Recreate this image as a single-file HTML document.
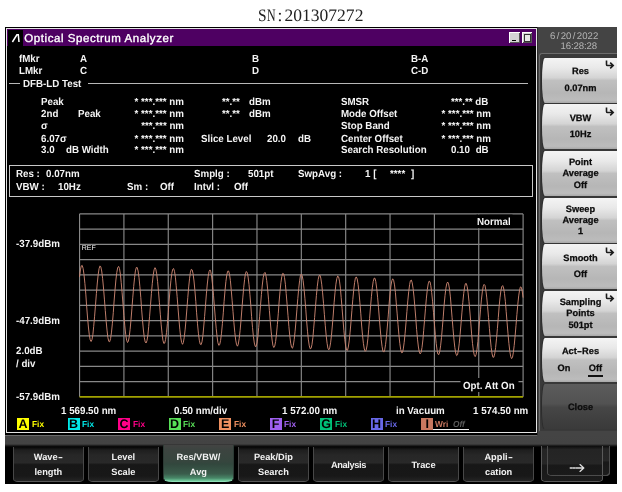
<!DOCTYPE html>
<html lang="en"><head><meta charset="utf-8"><title>Optical Spectrum Analyzer</title>
<style>
html,body{margin:0;padding:0;background:#fff;}
body{width:622px;height:492px;position:relative;overflow:hidden;font-family:"Liberation Sans",sans-serif;text-rendering:geometricPrecision;will-change:transform;}
.sn{position:absolute;left:258.1px;letter-spacing:0.03px;top:5px;font-family:"Liberation Serif",serif;font-size:17.5px;line-height:20px;color:#222;white-space:nowrap;}
.sn .c{display:inline-block;width:8.78px;height:20px;vertical-align:top;}
.sn .c span{display:inline-block;transform-origin:0 50%;}
.screen{position:absolute;left:5.2px;top:27.2px;width:611.7px;height:457.1px;background:#000;}
.win{position:absolute;left:6.1px;top:28px;width:531.3px;height:405.4px;border:1px solid #e4e4e4;background:#000;box-sizing:border-box;}
.title{position:absolute;left:7.1px;top:28.8px;width:529.4px;height:17.6px;background:#4e0062;}
.logo{position:absolute;left:7.9px;top:29.5px;width:15.1px;height:16.4px;background:#000;}
.ttext{position:absolute;left:24.3px;top:32px;font-size:11.5px;line-height:14px;color:#fff;letter-spacing:0.56px;white-space:nowrap;-webkit-text-stroke:0.35px #fff;}
.wb{position:absolute;top:32px;width:10.6px;height:10.9px;background:#d4d4d4;box-shadow:inset 1px 1px 0 #fff, inset -1px -1px 0 #555;}
.t{position:absolute;font-size:10.25px;line-height:12px;font-weight:bold;color:#f4f4f4;white-space:nowrap;transform:scaleX(0.951);transform-origin:0 50%;}
.t.r{transform-origin:100% 50%;}
.fx{font-size:8.75px;}
.tb{position:absolute;top:417.8px;width:11.9px;height:11.9px;font-size:12.5px;line-height:12px;font-weight:bold;color:#000;text-align:center;}
.hl{position:absolute;height:1px;background:#b8b8b8;}
.box{position:absolute;left:9.3px;top:164.5px;width:521.7px;height:30.3px;border:1px solid #c8c8c8;}
.rp{position:absolute;left:537.3px;top:27.2px;width:79.6px;height:417px;background:#444;border-left:1px solid #2c2c2c;box-sizing:border-box;}
.rf{position:absolute;left:539px;top:53.4px;width:77.9px;height:378px;border:1px solid #6c6c6c;border-right:0;border-bottom:0;border-radius:3px 0 0 0;background:#3a3a3a;box-sizing:border-box;}
.band{position:absolute;left:5.2px;top:434.7px;width:611.7px;height:12px;background:linear-gradient(#444 0,#434343 9px,#1a1a1a 10.7px,#000 12px);}
.band2{position:absolute;left:5.2px;top:434.7px;width:532.1px;height:1.2px;background:#6a6a6a;}
.date{position:absolute;left:538px;width:79px;font-size:9.6px;line-height:12px;color:#b4b4b4;white-space:nowrap;letter-spacing:0.05px;}
.date i{font-style:normal;padding:0 1.3px;}
.rb{position:absolute;left:541.6px;width:75.3px;height:44.8px;border-radius:2.8px 0 0 2.8px / 22px 0 0 22px;background:linear-gradient(#f4f4f4 0%,#e9e9e9 22%,#d4d4d4 44%,#c0c0c0 50%,#b6b6b6 78%,#bcbcbc 94%,#a8a8a8 100%);box-shadow:-1px 0 1px #2a2a2a;}
.rb.dark{background:linear-gradient(#5c5c5c 0%,#525252 44%,#464646 52%,#3a3a3a 100%);}
.rt{position:absolute;text-align:center;font-size:9.25px;line-height:12px;font-weight:bold;color:#0c0c0c;white-space:nowrap;-webkit-text-stroke:0.25px #0c0c0c;}
.bb{position:absolute;top:446.6px;width:70.7px;height:35.6px;box-sizing:border-box;border:1px solid #484848;border-top:0;border-bottom-color:#585858;border-radius:0 0 5px 5px / 0 0 3px 3px;background:linear-gradient(#060606 0%,#1e1e1e 9%,#272727 24%,#292929 46%,#171717 52%,#181818 85%,#242424 100%);}
.bb.sel{top:445px;height:37.3px;border-color:#2c3a34;border-bottom-color:#8fe0b8;border-radius:0 0 9px 9px / 0 0 3.5px 3.5px;background:linear-gradient(#434443 0%,#3c4440 14%,#36463e 46%,#32473d 53%,#3a5c4b 80%,#488868 92%,#74cfa0 100%);}
.bb.nx{border-color:#5a5a5a;background:linear-gradient(#0c0c0c 0%,#242424 10%,#262626 50%,#181818 56%,#1c1c1c 100%);}
.bt{position:absolute;width:70.7px;text-align:center;font-size:9.25px;line-height:12px;font-weight:bold;color:#f2f2f2;white-space:nowrap;}
.hy{display:inline-block;transform:scaleX(1.6);margin:0 1.1px;}
svg{position:absolute;left:0;top:0;}
</style></head><body>
<div class="sn"><span class="c"><span style="transform:scaleX(0.88)">S</span></span><span class="c"><span style="transform:scaleX(0.68)">N</span></span><span class="c" style="text-align:center">:</span>201307272</div>
<div class="screen"></div>
<div class="rp"></div>
<div class="rf"></div>
<div class="band"></div>
<div class="band2"></div>
<div class="win"></div>
<div class="title"></div>
<div class="logo"><svg width="15.1" height="16.4" viewBox="0 0 15.1 16.4"><path d="M4.4 12 L8.9 4.8 H10.3 L11 12" fill="none" stroke="#fff" stroke-width="1.5" stroke-linejoin="miter"/></svg></div>
<div class="ttext">Optical Spectrum Analyzer</div>
<div class="wb" style="left:509.3px"><div style="position:absolute;left:3px;top:7.5px;width:4px;height:1.5px;background:#000"></div></div>
<div class="wb" style="left:521.8px"><div style="position:absolute;left:2.3px;top:2px;width:5px;height:5.5px;border:1px solid #333;border-top-width:1.6px;background:#e8e8e8;box-sizing:content-box"></div></div>
<div class="hl" style="left:9px;width:10.5px;top:83.3px"></div>
<div class="hl" style="left:88.4px;width:440px;top:83.3px"></div>
<div class="box"></div>
<svg width="622" height="492" viewBox="0 0 622 492">
<g stroke="#888" stroke-width="1.15">
<line x1="79.55" y1="213.9" x2="79.55" y2="396.8"/>
<line x1="123.91" y1="213.9" x2="123.91" y2="396.8"/>
<line x1="168.26" y1="213.9" x2="168.26" y2="396.8"/>
<line x1="212.62" y1="213.9" x2="212.62" y2="396.8"/>
<line x1="256.97" y1="213.9" x2="256.97" y2="396.8"/>
<line x1="301.33" y1="213.9" x2="301.33" y2="396.8"/>
<line x1="345.68" y1="213.9" x2="345.68" y2="396.8"/>
<line x1="390.04" y1="213.9" x2="390.04" y2="396.8"/>
<line x1="434.39" y1="213.9" x2="434.39" y2="396.8"/>
<line x1="478.75" y1="213.9" x2="478.75" y2="396.8"/>
<line x1="523.10" y1="213.9" x2="523.10" y2="396.8"/>
<line x1="79.55" y1="213.90" x2="523.1" y2="213.90"/>
<line x1="79.55" y1="229.14" x2="523.1" y2="229.14"/>
<line x1="79.55" y1="244.38" x2="523.1" y2="244.38"/>
<line x1="79.55" y1="259.62" x2="523.1" y2="259.62"/>
<line x1="79.55" y1="274.87" x2="523.1" y2="274.87"/>
<line x1="79.55" y1="290.11" x2="523.1" y2="290.11"/>
<line x1="79.55" y1="305.35" x2="523.1" y2="305.35"/>
<line x1="79.55" y1="320.59" x2="523.1" y2="320.59"/>
<line x1="79.55" y1="335.83" x2="523.1" y2="335.83"/>
<line x1="79.55" y1="351.08" x2="523.1" y2="351.08"/>
<line x1="79.55" y1="366.32" x2="523.1" y2="366.32"/>
<line x1="79.55" y1="381.56" x2="523.1" y2="381.56"/>
</g>
<line x1="79.55" y1="396.8" x2="523.1" y2="396.8" stroke="#a2a200" stroke-width="1.8"/>
<polyline fill="none" stroke="#c88470" stroke-width="0.95" stroke-linejoin="round" points="79.5,276.9 80.4,269.9 81.3,265.9 82.2,265.4 83.1,268.4 84.0,274.6 84.9,283.5 85.8,294.1 86.6,305.6 87.5,317.0 88.4,327.0 89.3,334.9 90.2,339.9 91.1,341.5 92.0,339.6 92.9,334.4 93.7,326.4 94.6,316.2 95.5,304.9 96.4,293.5 97.3,283.0 98.2,274.4 99.1,268.5 100.0,265.9 100.8,266.8 101.7,271.0 102.6,278.3 103.5,288.0 104.4,299.1 105.3,310.6 106.2,321.6 107.1,330.9 107.9,337.7 108.8,341.4 109.7,341.7 110.6,338.5 111.5,332.1 112.4,323.2 113.3,312.5 114.1,301.0 115.0,289.9 115.9,280.0 116.8,272.4 117.7,267.7 118.6,266.4 119.5,268.6 120.4,274.1 121.2,282.4 122.1,292.7 123.0,304.1 123.9,315.5 124.8,325.9 125.7,334.4 126.6,340.1 127.5,342.5 128.3,341.4 129.2,336.9 130.1,329.5 131.0,319.8 131.9,308.7 132.8,297.2 133.7,286.5 134.6,277.4 135.4,270.9 136.3,267.5 137.2,267.5 138.1,271.0 139.0,277.6 139.9,286.8 140.8,297.6 141.6,309.2 142.5,320.3 143.4,330.0 144.3,337.5 145.2,342.0 146.1,343.0 147.0,340.6 147.9,335.0 148.7,326.6 149.6,316.2 150.5,304.9 151.4,293.6 152.3,283.4 153.2,275.2 154.1,269.8 155.0,267.7 155.8,269.1 156.7,273.9 157.6,281.6 158.5,291.5 159.4,302.7 160.3,314.2 161.2,324.9 162.1,333.8 162.9,340.2 163.8,343.4 164.7,343.1 165.6,339.4 166.5,332.6 167.4,323.4 168.3,312.5 169.1,301.1 170.0,290.1 170.9,280.6 171.8,273.4 172.7,269.3 173.6,268.5 174.5,271.3 175.4,277.2 176.2,285.8 177.1,296.3 178.0,307.8 178.9,319.1 179.8,329.2 180.7,337.2 181.6,342.4 182.5,344.3 183.3,342.7 184.2,337.7 185.1,329.9 186.0,320.0 186.9,308.8 187.8,297.4 188.7,286.9 189.6,278.2 190.4,272.2 191.3,269.3 192.2,269.9 193.1,273.9 194.0,281.0 194.9,290.4 195.8,301.4 196.6,312.8 197.5,323.8 198.4,333.2 199.3,340.2 200.2,344.1 201.1,344.7 202.0,341.8 202.9,335.7 203.7,327.0 204.6,316.4 205.5,305.1 206.4,293.9 207.3,284.0 208.2,276.3 209.1,271.4 210.0,269.9 210.8,271.8 211.7,277.0 212.6,285.1 213.5,295.2 214.4,306.5 215.3,317.9 216.2,328.3 217.1,336.9 217.9,342.7 218.8,345.4 219.7,344.6 220.6,340.4 221.5,333.2 222.4,323.7 223.3,312.8 224.1,301.4 225.0,290.6 225.9,281.5 226.8,274.8 227.7,271.2 228.6,271.0 229.5,274.2 230.4,280.6 231.2,289.5 232.1,300.2 233.0,311.6 233.9,322.7 234.8,332.5 235.7,340.1 236.6,344.8 237.5,346.2 238.3,344.0 239.2,338.6 240.1,330.5 241.0,320.4 241.9,309.1 242.8,297.9 243.7,287.7 244.6,279.4 245.4,273.8 246.3,271.5 247.2,272.6 248.1,277.1 249.0,284.6 249.9,294.3 250.8,305.3 251.6,316.7 252.5,327.4 253.4,336.5 254.3,343.0 255.2,346.4 256.1,346.4 257.0,343.0 257.9,336.5 258.7,327.5 259.6,316.8 260.5,305.5 261.4,294.6 262.3,285.0 263.2,277.7 264.1,273.4 265.0,272.4 265.8,274.8 266.7,280.5 267.6,288.9 268.5,299.2 269.4,310.5 270.3,321.7 271.2,331.9 272.1,340.0 272.9,345.4 273.8,347.5 274.7,346.2 275.6,341.6 276.5,334.0 277.4,324.3 278.3,313.3 279.1,302.0 280.0,291.5 280.9,282.7 281.8,276.5 282.7,273.4 283.6,273.8 284.5,277.5 285.4,284.3 286.2,293.5 287.1,304.3 288.0,315.7 288.9,326.6 289.8,336.1 290.7,343.2 291.6,347.4 292.5,348.2 293.3,345.5 294.2,339.7 295.1,331.2 296.0,320.9 296.9,309.7 297.8,298.6 298.7,288.7 299.6,280.8 300.4,275.8 301.3,274.0 302.2,275.7 303.1,280.6 304.0,288.4 304.9,298.3 305.8,309.5 306.6,320.8 307.5,331.2 308.4,339.9 309.3,345.9 310.2,348.8 311.1,348.3 312.0,344.4 312.9,337.5 313.7,328.2 314.6,317.5 315.5,306.2 316.4,295.5 317.3,286.3 318.2,279.4 319.1,275.6 320.0,275.2 320.8,278.1 321.7,284.2 322.6,292.9 323.5,303.4 324.4,314.7 325.3,325.8 326.2,335.6 327.1,343.3 327.9,348.2 328.8,349.8 329.7,347.9 330.6,342.8 331.5,335.0 332.4,325.0 333.3,314.0 334.1,302.8 335.0,292.6 335.9,284.2 336.8,278.5 337.7,276.0 338.6,276.8 339.5,281.1 340.4,288.2 341.2,297.7 342.1,308.6 343.0,319.9 343.9,330.6 344.8,339.7 345.7,346.4 346.6,350.0 347.5,350.3 348.3,347.1 349.2,340.9 350.1,332.2 351.0,321.7 351.9,310.5 352.8,299.6 353.7,290.0 354.6,282.6 355.4,278.1 356.3,276.9 357.2,279.0 358.1,284.4 359.0,292.6 359.9,302.7 360.8,313.8 361.6,325.0 362.5,335.2 363.4,343.4 364.3,349.0 365.2,351.3 366.1,350.3 367.0,345.9 367.9,338.6 368.7,329.2 369.6,318.3 370.5,307.1 371.4,296.7 372.3,287.8 373.2,281.5 374.1,278.2 375.0,278.3 375.8,281.7 376.7,288.3 377.6,297.2 378.5,307.8 379.4,319.1 380.3,330.0 381.2,339.5 382.1,346.7 382.9,351.1 383.8,352.1 384.7,349.8 385.6,344.3 386.5,336.1 387.4,326.0 388.3,314.9 389.1,303.9 390.0,294.0 390.9,286.0 391.8,280.8 392.7,278.8 393.6,280.2 394.5,284.9 395.4,292.4 396.2,302.1 397.1,313.1 398.0,324.3 398.9,334.7 399.8,343.4 400.7,349.6 401.6,352.7 402.5,352.5 403.3,348.9 404.2,342.3 405.1,333.3 406.0,322.7 406.9,311.6 407.8,300.9 408.7,291.7 409.6,284.7 410.4,280.7 411.3,280.0 412.2,282.7 413.1,288.5 414.0,297.0 414.9,307.2 415.8,318.4 416.6,329.4 417.5,339.2 418.4,347.0 419.3,352.1 420.2,353.9 421.1,352.4 422.0,347.5 422.9,339.9 423.7,330.3 424.6,319.4 425.5,308.3 426.4,298.1 427.3,289.7 428.2,283.9 429.1,281.1 430.0,281.7 430.8,285.7 431.7,292.6 432.6,301.8 433.5,312.5 434.4,323.6 435.3,334.3 436.2,343.4 437.1,350.3 437.9,354.1 438.8,354.6 439.7,351.8 440.6,345.8 441.5,337.4 442.4,327.1 443.3,316.1 444.1,305.3 445.0,295.7 445.9,288.2 446.8,283.5 447.7,282.0 448.6,284.0 449.5,289.1 450.4,296.9 451.2,306.8 452.1,317.8 453.0,328.8 453.9,339.0 454.8,347.3 455.7,353.0 456.6,355.6 457.5,354.8 458.3,350.7 459.2,343.8 460.1,334.6 461.0,323.9 461.9,312.9 462.8,302.5 463.7,293.6 464.6,287.1 465.4,283.7 466.3,283.5 467.2,286.7 468.1,292.9 469.0,301.6 469.9,312.0 470.8,323.1 471.6,333.9 472.5,343.4 473.4,350.8 474.3,355.3 475.2,356.6 476.1,354.6 477.0,349.3 477.9,341.4 478.7,331.6 479.6,320.7 480.5,309.8 481.4,299.9 482.3,291.9 483.2,286.6 484.1,284.4 485.0,285.5 485.8,289.9 486.7,297.1 487.6,306.6 488.5,317.3 489.4,328.4 490.3,338.8 491.2,347.5 492.1,353.9 492.9,357.2 493.8,357.2 494.7,353.9 495.6,347.6 496.5,338.8 497.4,328.5 498.3,317.5 499.1,306.9 500.0,297.7 500.9,290.7 501.8,286.5 502.7,285.6 503.6,288.0 504.5,293.5 505.4,301.7 506.2,311.7 507.1,322.7 508.0,333.6 508.9,343.4 509.8,351.3 510.7,356.5 511.6,358.6 512.5,357.3 513.3,352.8 514.2,345.5 515.1,336.0 516.0,325.4 516.9,314.5 517.8,304.3 518.7,295.9 519.6,289.9 520.4,286.9 521.3,287.3 522.2,291.0 523.1,297.6"/>
<rect x="476.5" y="214.6" width="36" height="13.5" fill="#000"/>
<rect x="460.5" y="378" width="58" height="14" fill="#000"/>
<text x="81.8" y="250.4" font-family="Liberation Sans, sans-serif" font-size="7" fill="#f4f4f4">REF</text>
</svg>
<span class="t" style="left:19.30px;top:54px;">fMkr</span>
<span class="t" style="left:80.00px;top:54px;">A</span>
<span class="t" style="left:251.70px;top:54px;">B</span>
<span class="t" style="left:410.60px;top:54px;">B-A</span>
<span class="t" style="left:19.30px;top:66px;">LMkr</span>
<span class="t" style="left:80.00px;top:66px;">C</span>
<span class="t" style="left:251.70px;top:66px;">D</span>
<span class="t" style="left:410.60px;top:66px;">C-D</span>
<span class="t" style="left:22.60px;top:79px;">DFB-LD Test</span>
<span class="t" style="left:41.20px;top:97px;">Peak</span>
<span class="t" style="left:41.20px;top:109px;">2nd</span>
<span class="t" style="left:78.10px;top:109px;">Peak</span>
<span class="t" style="left:41.20px;top:121px;">σ</span>
<span class="t" style="left:41.20px;top:134px;">6.07σ</span>
<span class="t" style="left:41.20px;top:145px;">3.0</span>
<span class="t" style="left:65.50px;top:145px;">dB Width</span>
<span class="t r" style="right:438.00px;top:97px;">* ***.*** nm</span>
<span class="t r" style="right:438.00px;top:109px;">* ***.*** nm</span>
<span class="t r" style="right:438.00px;top:134px;">* ***.*** nm</span>
<span class="t r" style="right:438.00px;top:145px;">* ***.*** nm</span>
<span class="t r" style="right:438.00px;top:121px;">***.*** nm</span>
<span class="t r" style="right:351.60px;top:97px;">dBm</span>
<span class="t r" style="right:382.20px;top:97px;">**.**</span>
<span class="t r" style="right:351.60px;top:109px;">dBm</span>
<span class="t r" style="right:382.20px;top:109px;">**.**</span>
<span class="t" style="left:201.30px;top:134px;">Slice Level</span>
<span class="t" style="left:267.20px;top:134px;">20.0</span>
<span class="t" style="left:298.40px;top:134px;">dB</span>
<span class="t" style="left:341.40px;top:97px;">SMSR</span>
<span class="t" style="left:341.40px;top:109px;">Mode Offset</span>
<span class="t" style="left:341.40px;top:121px;">Stop Band</span>
<span class="t" style="left:341.40px;top:134px;">Center Offset</span>
<span class="t" style="left:341.40px;top:145px;">Search Resolution</span>
<span class="t r" style="right:133.30px;top:97px;">***.** dB</span>
<span class="t r" style="right:131.50px;top:109px;">* ***.*** nm</span>
<span class="t r" style="right:131.50px;top:121px;">* ***.*** nm</span>
<span class="t r" style="right:131.50px;top:134px;">* ***.*** nm</span>
<span class="t r" style="right:133.30px;top:145px;">dB</span>
<span class="t r" style="right:152.00px;top:145px;">0.10</span>
<span class="t" style="left:15.90px;top:169px;">Res :</span>
<span class="t" style="left:46.30px;top:169px;">0.07nm</span>
<span class="t" style="left:15.90px;top:182px;">VBW :</span>
<span class="t" style="left:57.60px;top:182px;">10Hz</span>
<span class="t" style="left:127.00px;top:182px;">Sm :</span>
<span class="t" style="left:159.60px;top:182px;">Off</span>
<span class="t" style="left:194.00px;top:169px;">Smplg :</span>
<span class="t" style="left:247.60px;top:169px;">501pt</span>
<span class="t" style="left:194.00px;top:182px;">Intvl :</span>
<span class="t" style="left:233.90px;top:182px;">Off</span>
<span class="t" style="left:298.30px;top:169px;">SwpAvg :</span>
<span class="t" style="left:364.60px;top:169px;">1 [</span>
<span class="t" style="left:389.60px;top:169px;">****</span>
<span class="t" style="left:410.50px;top:169px;">]</span>
<span class="t" style="left:15.60px;top:239px;">-37.9dBm</span>
<span class="t" style="left:15.60px;top:316px;">-47.9dBm</span>
<span class="t" style="left:15.60px;top:392px;">-57.9dBm</span>
<span class="t" style="left:15.60px;top:346px;">2.0dB</span>
<span class="t" style="left:15.60px;top:359px;">/ div</span>
<span class="t" style="left:61.00px;top:406px;">1 569.50 nm</span>
<span class="t" style="left:174.00px;top:406px;">0.50 nm/div</span>
<span class="t" style="left:282.00px;top:406px;">1 572.00 nm</span>
<span class="t" style="left:396.00px;top:406px;">in Vacuum</span>
<span class="t" style="left:472.70px;top:406px;">1 574.50 nm</span>
<span class="t" style="left:477.30px;top:217px;">Normal</span>
<span class="t" style="left:463.00px;top:381px;">Opt. Att On</span>
<span class="tb" style="left:17.2px;background:#ffff00">A</span>
<span class="t fx" style="left:31.60px;top:418px;color:#ffff00">Fix</span>
<span class="tb" style="left:67.7px;background:#00e8e8">B</span>
<span class="t fx" style="left:82.10px;top:418px;color:#00e8e8">Fix</span>
<span class="tb" style="left:118.2px;background:#ff0088">C</span>
<span class="t fx" style="left:132.60px;top:418px;color:#ff0088">Fix</span>
<span class="tb" style="left:168.7px;background:#58e058">D</span>
<span class="t fx" style="left:183.10px;top:418px;color:#58e058">Fix</span>
<span class="tb" style="left:219.2px;background:#f09060">E</span>
<span class="t fx" style="left:233.60px;top:418px;color:#f09060">Fix</span>
<span class="tb" style="left:269.7px;background:#a060f0">F</span>
<span class="t fx" style="left:284.10px;top:418px;color:#a060f0">Fix</span>
<span class="tb" style="left:320.2px;background:#00c078">G</span>
<span class="t fx" style="left:334.60px;top:418px;color:#00c078">Fix</span>
<span class="tb" style="left:370.7px;background:#6868e8">H</span>
<span class="t fx" style="left:385.10px;top:418px;color:#6868e8">Fix</span>
<span class="tb" style="left:421.2px;background:#c87860">I</span>
<span class="t fx" style="left:435.40px;top:418px;color:#c87860">Wri</span>
<span class="t fx" style="left:452.90px;top:418px;color:#5a5a5a;font-style:italic">Off</span>
<div style="position:absolute;left:433px;top:428.5px;width:35.5px;height:1px;background:#eee"></div>
<div class="date" style="left:550px;top:31px">6<i>/</i>20<i>/</i>2022</div>
<div class="date" style="left:560.6px;top:41px;letter-spacing:-0.12px">16:28:28</div>
<div class="rb" style="top:57.8px"></div>
<div class="rt" style="left:550.5px;width:60px;top:65px;">Res</div>
<div class="rt" style="left:550.5px;width:60px;top:82px;">0.07nm</div>
<svg style="left:605.3px;top:60.0px" width="10" height="10" viewBox="0 0 10 10"><path d="M1.5 0.6 V4.4 Q1.5 5.5 2.6 5.5 H7.8 M5.2 2.6 L8.2 5.5 L5.2 8.4" fill="none" stroke="#1c1c1c" stroke-width="1.6"/></svg>
<div class="rb" style="top:104.4px"></div>
<div class="rt" style="left:550.5px;width:60px;top:112px;">VBW</div>
<div class="rt" style="left:550.5px;width:60px;top:128px;">10Hz</div>
<svg style="left:605.3px;top:106.6px" width="10" height="10" viewBox="0 0 10 10"><path d="M1.5 0.6 V4.4 Q1.5 5.5 2.6 5.5 H7.8 M5.2 2.6 L8.2 5.5 L5.2 8.4" fill="none" stroke="#1c1c1c" stroke-width="1.6"/></svg>
<div class="rb" style="top:151.1px"></div>
<div class="rt" style="left:550.5px;width:60px;top:156px;">Point</div>
<div class="rt" style="left:550.5px;width:60px;top:167px;">Average</div>
<div class="rt" style="left:550.5px;width:60px;top:179px;">Off</div>
<div class="rb" style="top:197.8px"></div>
<div class="rt" style="left:550.5px;width:60px;top:203px;">Sweep</div>
<div class="rt" style="left:550.5px;width:60px;top:214px;">Average</div>
<div class="rt" style="left:550.5px;width:60px;top:225px;">1</div>
<div class="rb" style="top:244.4px"></div>
<div class="rt" style="left:550.5px;width:60px;top:252px;">Smooth</div>
<div class="rt" style="left:550.5px;width:60px;top:268px;">Off</div>
<svg style="left:605.3px;top:246.6px" width="10" height="10" viewBox="0 0 10 10"><path d="M1.5 0.6 V4.4 Q1.5 5.5 2.6 5.5 H7.8 M5.2 2.6 L8.2 5.5 L5.2 8.4" fill="none" stroke="#1c1c1c" stroke-width="1.6"/></svg>
<div class="rb" style="top:291.1px"></div>
<div class="rt" style="left:550.5px;width:60px;top:296px;">Sampling</div>
<div class="rt" style="left:550.5px;width:60px;top:307px;">Points</div>
<div class="rt" style="left:550.5px;width:60px;top:319px;">501pt</div>
<svg style="left:605.3px;top:293.2px" width="10" height="10" viewBox="0 0 10 10"><path d="M1.5 0.6 V4.4 Q1.5 5.5 2.6 5.5 H7.8 M5.2 2.6 L8.2 5.5 L5.2 8.4" fill="none" stroke="#1c1c1c" stroke-width="1.6"/></svg>
<div class="rb" style="top:337.7px"></div>
<div class="rt" style="left:550.5px;width:60px;top:345px;">Act<span class="hy">-</span>Res</div>
<div class="rt" style="left:549.0px;width:30px;top:362px;">On</div>
<div class="rt" style="left:580.5px;width:30px;top:362px;">Off</div>
<div style="position:absolute;left:588px;top:375.2px;width:14.5px;height:1.4px;background:#111"></div>
<div class="rb dark" style="top:384.4px"></div>
<div class="rt" style="left:550.5px;width:60px;top:401px;color:#0e0e0e">Close</div>
<div class="bb" style="left:13.0px"></div>
<div class="bt" style="left:13.0px;top:451px">Wave<span class="hy">-</span></div>
<div class="bt" style="left:13.0px;top:466px">length</div>
<div class="bb" style="left:88.0px"></div>
<div class="bt" style="left:88.0px;top:451px">Level</div>
<div class="bt" style="left:88.0px;top:466px">Scale</div>
<div class="bb sel" style="left:163.1px"></div>
<div class="bt" style="left:163.1px;top:451px">Res/VBW/</div>
<div class="bt" style="left:163.1px;top:466px">Avg</div>
<div class="bb" style="left:238.1px"></div>
<div class="bt" style="left:238.1px;top:451px">Peak/Dip</div>
<div class="bt" style="left:238.1px;top:466px">Search</div>
<div class="bb" style="left:313.2px"></div>
<div class="bt" style="left:313.2px;top:459px;letter-spacing:-0.4px">Analysis</div>
<div class="bb" style="left:388.2px"></div>
<div class="bt" style="left:388.2px;top:459px;letter-spacing:0px">Trace</div>
<div class="bb" style="left:463.3px"></div>
<div class="bt" style="left:463.3px;top:451px">Appli<span class="hy">-</span></div>
<div class="bt" style="left:463.3px;top:466px">cation</div>
<div class="bb nx" style="left:603px;top:446px;width:6.6px;height:30px;border-left:0;border-radius:0 0 4px 0"></div>
<div class="bb nx" style="left:540.5px;top:446px;width:62.7px;height:36px;"></div>
<div class="bb nx" style="left:546.9px;top:446px;width:62.7px;height:30px;background:none;border-color:#4c4c4c"></div>
<svg style="left:568px;top:462px" width="20" height="12" viewBox="0 0 20 12"><path d="M2.2 6 H4 M5 6 H7 M8 6 H15.5 M12 2.6 L15.8 6 L12 9.4" fill="none" stroke="#ddd" stroke-width="1.3" stroke-linecap="round" stroke-linejoin="round"/></svg>
</body></html>
